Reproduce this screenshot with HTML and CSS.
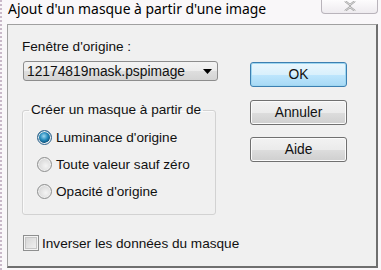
FILE: index.html
```html
<!DOCTYPE html>
<html lang="fr">
<head>
<meta charset="utf-8">
<title>Ajout d'un masque</title>
<link rel="stylesheet" href="styles.css">
</head>
<body>
<div class="window">
  <div class="titlebar">
    <span class="title">Ajout d'un masque à partir d'une image</span>
    <div class="close">
      <svg width="16" height="10" viewBox="0 0 16 10"><path d="M3 0 L8 4 L13 0 M3 10 L8 6 L13 10" fill="none" stroke="#9a9a9a" stroke-width="2"/><path d="M3 0 L8 4 L13 0 M3 10 L8 6 L13 10" fill="none" stroke="#fff" stroke-width="0.7"/></svg>
    </div>
  </div>
  <div class="client">
    <div class="left">
      <div class="label">Fenêtre d'origine :</div>
      <div class="select">
        <span class="select-text">12174819mask.pspimage</span>
        <svg class="arrow" width="9" height="5" viewBox="0 0 9 5"><path d="M0 0 H9 L4.5 5 Z" fill="#000"/></svg>
      </div>
      <fieldset class="group">
        <legend>Créer un masque à partir de</legend>
        <div class="radio-row">
          <span class="radio on"></span><span>Luminance d'origine</span>
        </div>
        <div class="radio-row">
          <span class="radio"></span><span>Toute valeur sauf zéro</span>
        </div>
        <div class="radio-row">
          <span class="radio"></span><span>Opacité d'origine</span>
        </div>
      </fieldset>
      <div class="check-row">
        <span class="checkbox"></span><span>Inverser les données du masque</span>
      </div>
    </div>
    <div class="buttons">
      <div class="btn default">OK</div>
      <div class="btn">Annuler</div>
      <div class="btn">Aide</div>
    </div>
  </div>
</div>
</body>
</html>
```
FILE: styles.css
```css
html, body {
  margin: 0;
  padding: 0;
}
body {
  width: 381px;
  height: 270px;
  overflow: hidden;
  background: #f9f7f9;
  font-family: "Liberation Sans", Arial, sans-serif;
  font-size: 13.6px;
  color: #111;
}
.window {
  height: 270px;
  box-sizing: border-box;
  border-left: 2px dotted #c9b9c9;
  display: flex;
  flex-direction: column;
}
.titlebar {
  height: 24px;
  display: flex;
  align-items: flex-start;
  padding-left: 6px;
}
.title {
  font-family: "Noto Sans", "Liberation Sans", sans-serif;
  font-size: 13.9px;
  line-height: 18px;
  color: #000;
}
.close {
  margin-left: auto;
  margin-right: 3px;
  width: 57px;
  height: 14px;
  border: 1px solid #b9b4bb;
  border-top: none;
  border-radius: 0 0 4px 4px;
  background: linear-gradient(#fdfcfd, #eeebef);
  display: flex;
  justify-content: center;
  align-items: flex-start;
  padding-top: 1px;
  box-sizing: border-box;
}
.client {
  margin-left: 5px;
  width: 371px;
  height: 244px;
  box-sizing: border-box;
  background: #f0f0f0;
  border-top: 1px solid #a0a0a0;
  border-left: 1px solid #a0a0a0;
  border-right: 2px solid #6f6f6f;
  border-bottom: 2px solid #6f6f6f;
  display: flex;
  align-items: flex-start;
  padding: 14px 0 0 14px;
}
.left {
  width: 196px;
  display: flex;
  flex-direction: column;
}
.label {
  line-height: 16px;
}
.select {
  margin: 6px 0 0 1px;
  width: 195px;
  height: 20px;
  box-sizing: border-box;
  border: 1px solid #8d8d8d;
  border-radius: 3px;
  background: linear-gradient(#f3f3f3 0%, #ececec 50%, #dedede 51%, #d4d4d4 100%);
  display: flex;
  align-items: center;
  padding: 0 5px 0 3px;
  font-size: 13.8px;
}
.select-text {
  flex: 1;
}
.arrow {
  margin-top: 1px;
}
.group {
  margin: 21px 0 0 0;
  width: 194px;
  box-sizing: border-box;
  border: 1px solid #d2d2d2;
  border-radius: 3px;
  padding: 6px 0 9px 14px;
  box-shadow: inset 1px 1px 0 #fafafa;
}
.group legend {
  padding: 0 2px;
  margin-left: -8px;
  line-height: 16px;
}
.radio-row {
  height: 27px;
  display: flex;
  align-items: center;
  gap: 4px;
  white-space: nowrap;
}
.radio {
  width: 15px;
  height: 15px;
  flex: none;
  box-sizing: border-box;
  border-radius: 50%;
  border: 1px solid #8e8f8f;
  background: radial-gradient(circle at 60% 60%, #f4f4f4 0%, #dcdcdc 60%, #c9c9c9 100%);
  box-shadow: inset 0 0 0 1px #f0f0f0;
}
.radio.on {
  border-color: #2c628b;
  background: radial-gradient(circle at 45% 40%, #9fd8f0 0%, #2a8fc0 35%, #0f5a86 60%, #d8e8f2 66%, #e8eef2 100%);
}
.check-row {
  margin: 20px 0 0 1px;
  display: flex;
  align-items: center;
  gap: 3px;
  height: 16px;
  white-space: nowrap;
}
.checkbox {
  width: 16px;
  height: 16px;
  flex: none;
  box-sizing: border-box;
  border: 1px solid #8e8f8f;
  background: linear-gradient(135deg, #d2d2d2 0%, #f4f4f4 100%);
  box-shadow: inset 0 0 0 1px #f4f4f4, inset 0 0 0 2px #c6c6c6;
}
.buttons {
  margin: 23px 0 0 32px;
  display: flex;
  flex-direction: column;
  gap: 12px;
}
.btn {
  width: 97px;
  height: 25px;
  box-sizing: border-box;
  border: 1px solid #707070;
  border-radius: 3px;
  background: linear-gradient(#f2f2f2 0%, #ebebeb 50%, #dddddd 51%, #cfcfcf 100%);
  box-shadow: inset 0 0 0 1px #fbfbfb;
  display: flex;
  align-items: center;
  justify-content: center;
  font-size: 13.8px;
}
.btn.default {
  border-color: #3c7fb1;
  background: linear-gradient(#eaf6fd 0%, #d9f0fc 50%, #bee6fd 51%, #a7d9f5 100%);
  box-shadow: inset 0 0 0 1px #9ed6f0;
  margin-bottom: 1px;
}
```
